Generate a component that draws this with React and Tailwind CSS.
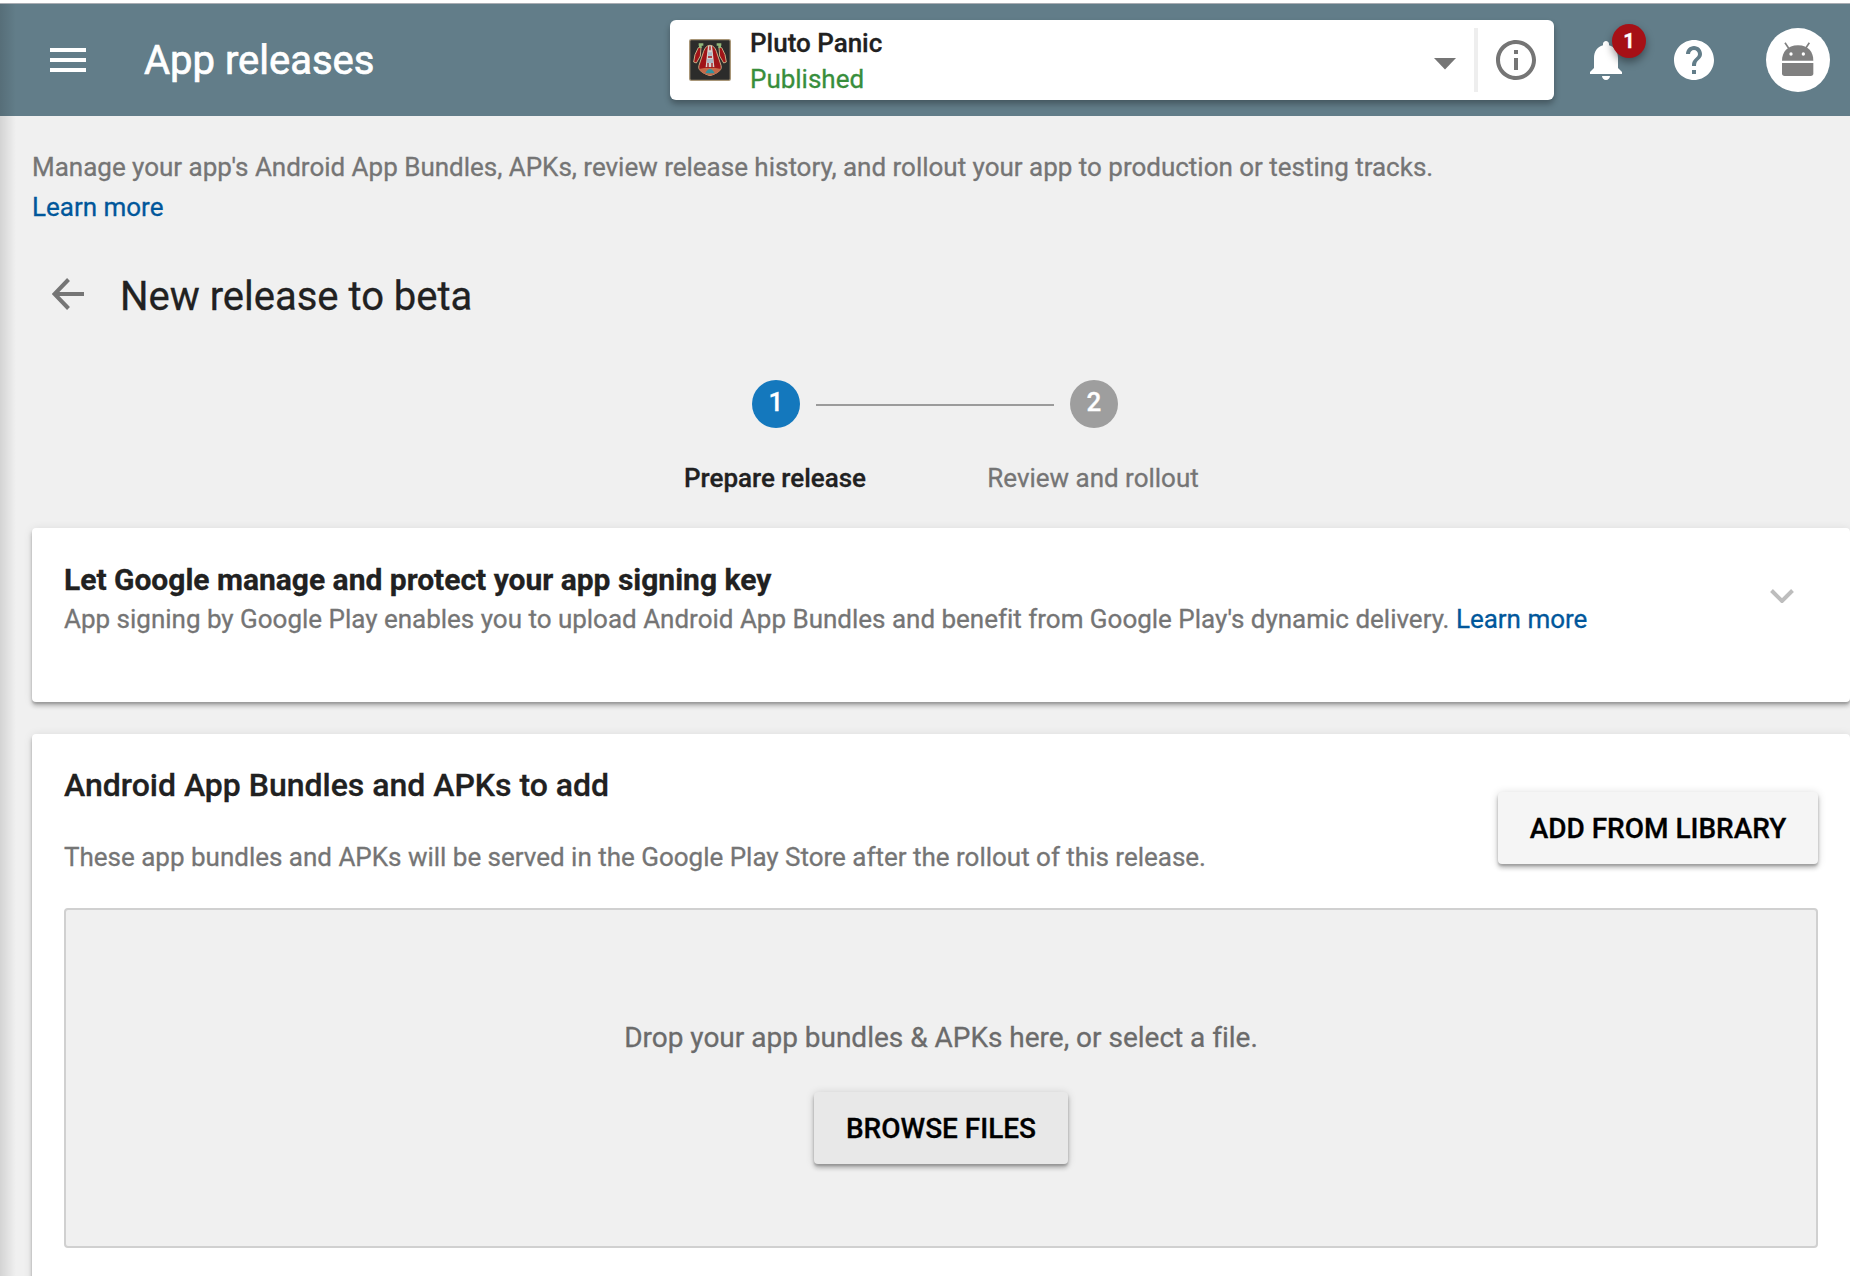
function MenuIcon() {
  return (
    <div className="flex h-6 w-9 flex-col justify-between">
      <div className="h-1 bg-white" />
      <div className="h-1 bg-white" />
      <div className="h-1 bg-white" />
    </div>
  );
}

function GameIcon() {
  return (
    <svg viewBox="0 0 126 126" className="size-[42px]">
      <rect x="2" y="2" width="122" height="122" rx="5" fill="#2c2c2b" stroke="#a89678" strokeWidth="4" />
      <g stroke="#c9ad85" strokeWidth="3" strokeLinejoin="round">
        <path d="M63 19c9 0 15 7 19 18l14 42c2 8 0 12-4 16-6 6-18 12-29 15-11-3-23-9-29-15-4-4-6-8-4-16l14-42c4-11 10-18 19-18z" fill="#a01418" />
        <path d="M36 25l-2 26-12 21-8-3 4-22 10-21z" fill="#a01418" />
        <path d="M90 25l2 26 12 21 8-3-4-22-10-21z" fill="#a01418" />
      </g>
      <path d="M30 90l20-4h26l20 4c-3 9-18 16-33 20-15-4-30-11-33-20z" fill="#c46a4a" />
      <path d="M57 20h12l3 26 4 38H50l4-38z" fill="#d9d3cf" />
      <path d="M63 22v12M57 54h12M57 72v14M69 72v14" stroke="#a01418" strokeWidth="4" />
      <path d="M57 40h12v10H57zM54 60h18v12H54z" fill="#a9b9c6" />
      <path d="M49 103c3-8 9-13 14-13s11 5 14 13z" fill="#2f93a0" />
      <path d="M29 13h14v7h-5v7h-8v-7h-1zM83 13h14v7h-1v7h-8v-7h-5z" fill="#93b77b" />
    </svg>
  );
}

function InfoIcon() {
  return (
    <svg viewBox="0 0 24 24" className="size-12" fill="#757575">
      <path d="M11 17h2v-6h-2v6zm1-15C6.48 2 2 6.48 2 12s4.48 10 10 10 10-4.48 10-10S17.52 2 12 2zm0 18c-4.41 0-8-3.59-8-8s3.59-8 8-8 8 3.59 8 8-3.59 8-8 8zM11 9h2V7h-2v2z" />
    </svg>
  );
}

function BellIcon() {
  return (
    <svg viewBox="0 0 24 24" className="size-12" fill="#fff">
      <path d="M12 22c1.1 0 2-.9 2-2h-4c0 1.1.9 2 2 2zm6-6v-5c0-3.07-1.64-5.64-4.5-6.32V4c0-.83-.67-1.5-1.5-1.5s-1.5.67-1.5 1.5v.68C7.63 5.36 6 7.92 6 11v5l-2 2v1h16v-1l-2-2z" />
    </svg>
  );
}

function HelpIcon() {
  return (
    <svg viewBox="0 0 24 24" className="size-12" fill="#fff">
      <path d="M12 2C6.48 2 2 6.48 2 12s4.48 10 10 10 10-4.48 10-10S17.52 2 12 2zm1 17h-2v-2h2v2zm2.07-7.75l-.9.92C13.45 12.9 13 13.5 13 15h-2v-.5c0-1.1.45-2.1 1.17-2.83l1.24-1.26c.37-.36.59-.86.59-1.41 0-1.1-.9-2-2-2s-2 .9-2 2H8c0-2.21 1.79-4 4-4s4 1.79 4 4c0 .88-.36 1.68-.93 2.25z" />
    </svg>
  );
}

function AndroidAvatar() {
  return (
    <svg viewBox="0 0 192 192" className="size-16">
      <circle cx="96" cy="96" r="96" fill="#fff" />
      <g fill="#808080">
        <path d="M48 98c0-25 16-46 48-46s46 21 46 46z" />
        <path d="M48 105h94v31a8 8 0 0 1-8 8H56a8 8 0 0 1-8-8z" />
      </g>
      <path d="M57 44l12 18M130 44l-12 18" stroke="#808080" strokeWidth="5" />
      <circle cx="75" cy="78" r="5" fill="#fff" />
      <circle cx="112" cy="78" r="5" fill="#fff" />
    </svg>
  );
}

function Header() {
  return (
    <header className="flex h-28 items-center bg-[#627d89] pl-[50px] pr-5">
      <MenuIcon />
      <h1 className="ml-[58px] w-[526px] whitespace-nowrap pt-0.5 text-[40px] leading-none text-white [-webkit-text-stroke:0.7px_white]">
        App releases
      </h1>
      <div className="flex h-20 w-[884px] items-center rounded-md bg-white pl-[19px] shadow-[0_4px_6px_rgba(0,0,0,0.3)]">
        <GameIcon />
        <div className="ml-[19px] flex-1 pt-0.5 text-[26px] leading-9">
          <div className="font-medium text-[#212121]">Pluto Panic</div>
          <div className="text-[#388e3c]">Published</div>
        </div>
        <svg viewBox="0 0 22 12" className="mr-[18px] mt-[7px] h-3 w-[22px]" fill="#757575">
          <path d="M0 0h22L11 11.500z" />
        </svg>
        <div className="mr-3.5 h-16 w-1 bg-[#eeeeee]" />
        <div className="mr-3.5">
          <InfoIcon />
        </div>
      </div>
      <div className="relative ml-7">
        <BellIcon />
        <span className="absolute -top-3 left-[30px] flex size-[34px] items-center justify-center rounded-full bg-[#a61016] text-[20px] font-bold leading-none text-white shadow-[0_4px_8px_rgba(0,0,0,0.4)]">
          1
        </span>
      </div>
      <div className="ml-10">
        <HelpIcon />
      </div>
      <div className="ml-12">
        <AndroidAvatar />
      </div>
    </header>
  );
}

function Step({ number, label, active }) {
  return (
    <div className="flex w-[318px] flex-col items-center">
      <div
        className={
          active
            ? "flex size-12 items-center justify-center rounded-full bg-[#1478bd] pb-[3px] text-[26px] font-medium text-white"
            : "flex size-12 items-center justify-center rounded-full bg-[#9e9e9e] pb-[3px] text-[26px] font-medium text-white"
        }
      >
        {number}
      </div>
      <div
        className={
          active
            ? "mr-0.5 mt-[30px] whitespace-nowrap text-[26px] leading-10 font-medium text-[#212121]"
            : "mr-0.5 mt-[30px] whitespace-nowrap text-[26px] leading-10 text-[#757575]"
        }
      >
        {label}
      </div>
    </div>
  );
}

function Stepper() {
  return (
    <div className="relative ml-[585px] flex">
      <Step number="1" label="Prepare release" active />
      <div className="absolute left-[199px] top-6 h-0.5 w-[238px] bg-[#9b9b9b]" />
      <Step number="2" label="Review and rollout" />
    </div>
  );
}

const CARD = "rounded bg-white shadow-[0_4px_4px_rgba(0,0,0,0.2),0_1px_10px_rgba(0,0,0,0.1),0_2px_2px_rgba(0,0,0,0.15)]";
const BUTTON =
  "flex h-[72px] items-center justify-center whitespace-nowrap rounded pt-px text-[28px] font-medium text-black shadow-[0_4px_4px_rgba(0,0,0,0.2),0_1px_8px_rgba(0,0,0,0.16),0_2px_2px_rgba(0,0,0,0.15)]";

function SigningCard() {
  return (
    <section className={CARD + " mt-[30px] flex h-[174px] justify-between pl-8 pr-[56px]"}>
      <div className="pt-8">
        <h3 className="text-[30px] leading-10 font-bold text-[#212121]">Let Google manage and protect your app signing key</h3>
        <p className="-mt-[1px] whitespace-nowrap text-[26px] leading-10 text-[#757575]">
          App signing by Google Play enables you to upload Android App Bundles and benefit from Google Play's dynamic delivery.{" "}
          <a className="text-[#01579b]">Learn more</a>
        </p>
      </div>
      <svg viewBox="0 0 24 14" className="mt-[61px] h-3.5 w-6" fill="none" stroke="#bdbdbd" strokeWidth="4">
        <path d="M1.500 1.500L12 12L22.500 1.500" />
      </svg>
    </section>
  );
}

function BundlesCard() {
  return (
    <section className={CARD + " mt-8 h-[600px] px-8"}>
      <div className="flex justify-between">
        <div className="pt-[31px]">
          <h3 className="text-[32px] leading-10 font-medium text-[#212121]">Android App Bundles and APKs to add</h3>
          <p className="mt-8 text-[26px] leading-10 text-[#757575]">
            These app bundles and APKs will be served in the Google Play Store after the rollout of this release.
          </p>
        </div>
        <button className={BUTTON + " mt-[58px] w-[320px] bg-[#f5f5f5]"}>ADD FROM LIBRARY</button>
      </div>
      <div className="mt-[31px] flex h-[340px] flex-col items-center rounded border-2 border-[#d0d0d0] bg-[#f0f0f0] pt-[108px]">
        <p className="text-[28px] leading-10 text-[#6b6b6b]">Drop your app bundles & APKs here, or select a file.</p>
        <button className={BUTTON + " mt-[34px] w-[254px] bg-[#e8e8e8]"}>BROWSE FILES</button>
      </div>
    </section>
  );
}

export default function App() {
  return (
    <div className="relative h-[1276px] w-[1850px] overflow-hidden bg-[#f0f0f0] font-['Roboto',sans-serif] tracking-[-0.01px] [-webkit-text-stroke:0.3px]">
      <div className="h-1 border-b border-[#a9adb3] bg-white" />
      <Header />
      <main className="pl-8">
        <p className="pt-[31px] text-[26px] leading-10 text-[#757575]">
          Manage your app's Android App Bundles, APKs, review release history, and rollout your app to production or testing tracks.
          <br />
          <a className="text-[#01579b]">Learn more</a>
        </p>
        <div className="mt-[45px] mb-[50px] flex h-[58px] items-center">
          <svg viewBox="0 0 32 32" className="ml-5 -mt-[14px] size-8" fill="none" stroke="#757575" strokeWidth="4">
            <path d="M32 16H4M16.500 1.500L2.500 16L16.500 30.500" />
          </svg>
          <h2 className="ml-9 -mt-2 text-[40px] leading-10 text-[#212121]">New release to beta</h2>
        </div>
        <Stepper />
        <SigningCard />
        <BundlesCard />
      </main>
      <div className="absolute left-0 top-1 h-full w-4 bg-gradient-to-r from-black/12 to-transparent" />
    </div>
  );
}
